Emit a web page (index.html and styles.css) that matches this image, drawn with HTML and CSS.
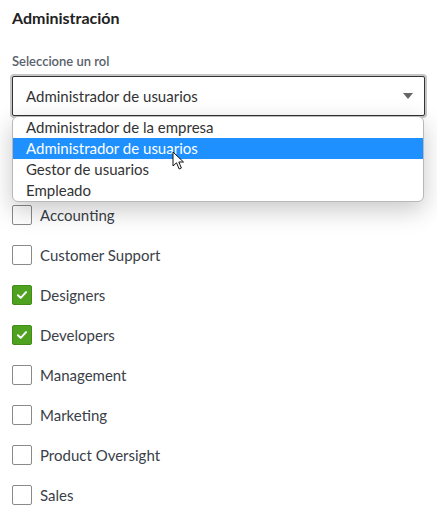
FILE: index.html
```html
<!DOCTYPE html>
<html lang="es">
<head>
<meta charset="utf-8">
<title>Administración</title>
<link rel="stylesheet" href="styles.css">
</head>
<body>
<div class="page">
  <h2 class="title">Administración</h2>
  <div class="label">Seleccione un rol</div>
  <div class="select-wrap">
    <div class="select">
      <span class="select-value">Administrador de usuarios</span>
      <span class="caret"></span>
    </div>
    <ul class="options">
      <li class="option">Administrador de la empresa</li>
      <li class="option active">Administrador de usuarios</li>
      <li class="option">Gestor de usuarios</li>
      <li class="option">Empleado</li>
    </ul>
    <svg class="cursor" width="14" height="20" viewBox="0 0 14 20">
      <path d="M1 1 L1 15 L4.5 11.8 L7.2 18 L9.4 17 L6.8 11 L11.5 11 Z" fill="#fff" stroke="#111" stroke-width="1" stroke-linejoin="round"/>
    </svg>
  </div>
  <ul class="checks">
    <li class="check-row"><span class="box"></span><span class="check-label">Accounting</span></li>
    <li class="check-row"><span class="box"></span><span class="check-label">Customer Support</span></li>
    <li class="check-row"><span class="box checked"><svg width="20" height="20" viewBox="0 0 20 20"><path d="M5.5 10.2 L8.6 13.2 L14.5 6.8" fill="none" stroke="#fff" stroke-width="2.2" stroke-linecap="round" stroke-linejoin="round"/></svg></span><span class="check-label">Designers</span></li>
    <li class="check-row"><span class="box checked"><svg width="20" height="20" viewBox="0 0 20 20"><path d="M5.5 10.2 L8.6 13.2 L14.5 6.8" fill="none" stroke="#fff" stroke-width="2.2" stroke-linecap="round" stroke-linejoin="round"/></svg></span><span class="check-label">Developers</span></li>
    <li class="check-row"><span class="box"></span><span class="check-label">Management</span></li>
    <li class="check-row"><span class="box"></span><span class="check-label">Marketing</span></li>
    <li class="check-row"><span class="box"></span><span class="check-label">Product Oversight</span></li>
    <li class="check-row"><span class="box"></span><span class="check-label">Sales</span></li>
  </ul>
</div>
</body>
</html>
```
FILE: styles.css
```css
html, body {
  margin: 0;
  padding: 0;
  background: #fff;
}
body {
  font-family: Lato, "Open Sans", "Liberation Sans", sans-serif;
  color: #333;
}
.page {
  padding: 8px 12px 0 12px;
}
.title {
  margin: 0;
  font-size: 16px;
  font-weight: 700;
  line-height: 19px;
  color: #222;
}
.label {
  margin-top: 26px;
  font-size: 13px;
  line-height: 16px;
  color: #59616b;
  font-weight: 600;
}
.select-wrap {
  position: relative;
  margin-top: 7px;
}
.select {
  height: 38px;
  border: 1px solid #333;
  border-radius: 2px;
  box-shadow: 0 0 0 2px #c4c6c8;
  display: flex;
  align-items: center;
  justify-content: space-between;
  padding: 0 11px 0 13px;
  background: #fff;
}
.select-value {
  font-size: 15px;
  color: #333;
}
.caret {
  width: 0;
  height: 0;
  border-left: 5px solid transparent;
  border-right: 5px solid transparent;
  border-top: 6px solid #666;
}
.options {
  position: absolute;
  left: 0;
  right: 1px;
  top: 40px;
  margin: 0;
  padding: 0;
  list-style: none;
  background: #fff;
  border: 1px solid #b8b8b8;
  border-radius: 6px;
  overflow: hidden;
  box-shadow: 0 8px 24px rgba(0, 0, 0, 0.22);
  z-index: 2;
}
.option {
  height: 21px;
  line-height: 20px;
  padding-left: 13px;
  font-size: 15px;
  color: #333;
}
.option.active {
  background: #1e90ff;
  color: #fff;
}
.cursor {
  position: absolute;
  left: 160px;
  top: 75px;
  z-index: 3;
}
.checks {
  list-style: none;
  margin: 79px 0 0 0;
  padding: 0;
}
.check-row {
  height: 40px;
  display: flex;
  align-items: center;
  gap: 8px;
}
.box {
  width: 18px;
  height: 18px;
  border: 1px solid #8a8a8a;
  border-radius: 2px;
  background: #fff;
  display: flex;
  align-items: center;
  justify-content: center;
  flex: none;
}
.box.checked {
  background: #4ea21f;
  border-color: #3f8d17;
}
.box svg {
  display: block;
}
.check-label {
  font-size: 15px;
  color: #3a4048;
}
```
